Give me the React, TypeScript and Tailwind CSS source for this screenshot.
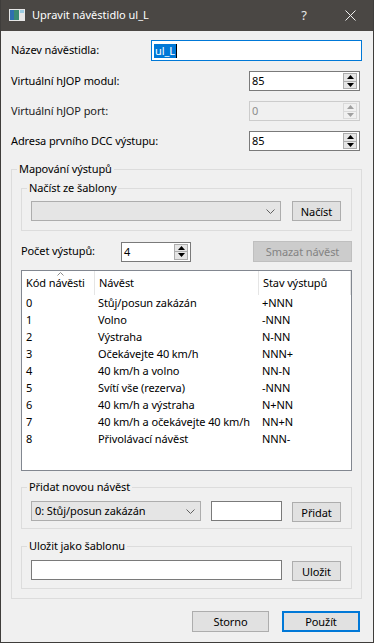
const signals = [
  ["0", "Stůj/posun zakázán", "+NNN"],
  ["1", "Volno", "-NNN"],
  ["2", "Výstraha", "N-NN"],
  ["3", "Očekávejte 40 km/h", "NNN+"],
  ["4", "40 km/h a volno", "NN-N"],
  ["5", "Svítí vše (rezerva)", "-NNN"],
  ["6", "40 km/h a výstraha", "N+NN"],
  ["7", "40 km/h a očekávejte 40 km/h", "NN+N"],
  ["8", "Přivolávací návěst", "NNN-"],
];

function Arrow({ up, disabled }: { up: boolean; disabled?: boolean }) {
  return (
    <svg width="7" height="4" viewBox="0 0 7 4">
      <polygon
        points={up ? "3.5,0 7,4 0,4" : "0,0 7,0 3.5,4"}
        fill={disabled ? "#a0a0a0" : "#000"}
      />
    </svg>
  );
}

function SpinBox({ value, width, disabled = false }: { value: string; width: string; disabled?: boolean }) {
  return (
    <div
      className={`flex items-center h-[20px] border ${width} ${
        disabled ? "border-[#cccccc] bg-[#f0f0f0] text-[#8d8d8d]" : "border-[#7a7a7a] bg-white text-black"
      }`}
    >
      <span className="flex-1 pl-[2px] leading-[18px]">{value}</span>
      <div
        className={`mr-[2px] flex flex-col w-[14px] h-[16px] border ${
          disabled ? "border-[#dadada] bg-[#f0f0f0]" : "border-[#adadad] bg-[#e5e5e5]"
        }`}
      >
        <div className={`flex-1 flex items-center justify-center border-b ${disabled ? "border-[#dadada]" : "border-[#adadad]"}`}>
          <Arrow up disabled={disabled} />
        </div>
        <div className="flex-1 flex items-center justify-center">
          <Arrow up={false} disabled={disabled} />
        </div>
      </div>
    </div>
  );
}

function Combo({ width, text }: { width: string; text?: string }) {
  return (
    <div className={`flex items-center h-[20px] border border-[#adadad] bg-[#e5e5e5] ${width}`}>
      <span className="flex-1 pl-[3px] leading-[18px]">{text}</span>
      <svg width="9" height="5" viewBox="0 0 9 5" className="mr-[5px]">
        <polyline points="0.5,0.5 4.5,4.5 8.5,0.5" fill="none" stroke="#606060" strokeWidth="1" />
      </svg>
    </div>
  );
}

function Btn({ children, className = "" }: { children: React.ReactNode; className?: string }) {
  return (
    <button className={`h-[20px] flex items-center justify-center border border-[#adadad] bg-[#e1e1e1] leading-none ${className}`}>
      {children}
    </button>
  );
}

function Group({ title, className = "", children }: { title: string; className?: string; children: React.ReactNode }) {
  return (
    <fieldset className={`border border-[#dcdcdc] ${className}`}>
      <legend className="ml-[5px] px-[2px] leading-[16px]">{title}</legend>
      {children}
    </fieldset>
  );
}

export default function App() {
  return (
    <div className="w-[374px] h-[643px] flex flex-col bg-[#f0f0f0] border-x border-b border-[#3f3d3b] font-['Noto_Sans',sans-serif] text-[11px] tracking-[-0.1px] text-black overflow-hidden">
      {/* ── Title bar ── */}
      <div className="h-[31px] shrink-0 flex items-center bg-[#4a4744] text-white tracking-normal">
        <svg width="16" height="12" viewBox="0 0 16 12" className="ml-[8px] mt-[-1px]">
          <rect x="0" y="0" width="16" height="12" fill="#e6e6e6" />
          <rect x="1" y="1" width="9" height="10" fill="#3b8a74" />
          <rect x="1" y="1" width="4" height="10" fill="#2f6fb0" />
          <rect x="11" y="1" width="4" height="3" fill="#9ccbe0" />
        </svg>
        <span className="ml-[7px] text-[11px]">Upravit návěstidlo ul_L</span>
        <span className="ml-auto mr-[38px] text-[13px] text-[#e8e8e8]">?</span>
        <svg width="11" height="11" viewBox="0 0 11 11" className="mr-[17px]">
          <path d="M0.5 0.5 L10.5 10.5 M10.5 0.5 L0.5 10.5" stroke="#f0f0f0" strokeWidth="1" />
        </svg>
      </div>

      {/* ── Body ── */}
      <div className="flex-1 flex flex-col pl-[10px] pr-[11px] pt-[9px]">
        <div className="flex items-center justify-between h-[21px]">
          <span>Název návěstidla:</span>
          <div className="w-[211px] h-[21px] flex items-center border border-[#0078d7] bg-white pl-[2px]">
            <span className="bg-[#0078d7] text-white leading-[14px] px-[1px]">ul_L</span>
            <span className="w-[1px] h-[14px] bg-black" />
          </div>
        </div>
        <div className="flex items-center justify-between mt-[10px] pr-[2px]">
          <span>Virtuální hJOP modul:</span>
          <SpinBox value="85" width="w-[111px]" />
        </div>
        <div className="flex items-center justify-between mt-[10px] pr-[2px]">
          <span className="text-[#222]">Virtuální hJOP port:</span>
          <SpinBox value="0" width="w-[111px]" disabled />
        </div>
        <div className="flex items-center justify-between mt-[10px] pr-[2px]">
          <span>Adresa prvního DCC výstupu:</span>
          <SpinBox value="85" width="w-[111px]" />
        </div>

        {/* ── Mapování výstupů ── */}
        <Group title="Mapování výstupů" className="mt-[10px]">
          <div className="px-[9px] pb-[9px]">
            <Group title="Načíst ze šablony" className="mt-[3px]">
              <div className="flex items-center gap-[11px] pl-[9px] mt-[5px] mb-[9px]">
                <Combo width="w-[250px]" />
                <Btn className="w-[49px]">Načíst</Btn>
              </div>
            </Group>

            <div className="flex items-center h-[21px] mt-[10px]">
              <span className="w-[100px]">Počet výstupů:</span>
              <SpinBox value="4" width="w-[70px]" />
              <button className="ml-auto w-[99px] h-[21px] border border-[#bfbfbf] bg-[#cccccc] text-[#838383] leading-none">
                Smazat návěst
              </button>
            </div>

            <div className="mt-[8px] h-[201px] border border-[#828790] bg-white">
              <div className="relative flex h-[24px] items-center">
                <div className="w-[73px] h-full flex items-center pl-[4px] border-r border-[#e5e5e5]">Kód návěsti</div>
                <div className="w-[164px] h-full flex items-center pl-[4px] border-r border-[#e5e5e5]">Návěst</div>
                <div className="w-[92px] h-full flex items-center pl-[4px] border-r border-[#e5e5e5]">Stav výstupů</div>
                <svg width="7" height="4" viewBox="0 0 7 4" className="absolute left-[35px] top-[1px]">
                  <polyline points="0.5,3.5 3.5,0.5 6.5,3.5" fill="none" stroke="#8a8a8a" strokeWidth="1" />
                </svg>
              </div>
              {signals.map(([code, name, state]) => (
                <div key={code} className="flex h-[17px] items-center whitespace-nowrap">
                  <div className="w-[73px] pl-[4px]">{code}</div>
                  <div className="w-[164px] pl-[3px]">{name}</div>
                  <div className="w-[92px] pl-[3px]">{state}</div>
                </div>
              ))}
            </div>

            <Group title="Přidat novou návěst" className="mt-[8px]">
              <div className="flex items-start h-[21px] gap-[10px] pl-[9px] mt-[6px] mb-[6px]">
                <Combo width="w-[170px]" text="0: Stůj/posun zakázán" />
                <div className="w-[71px] h-[20px] border border-[#7a7a7a] bg-white" />
                <Btn className="w-[49px] mt-[1px]">Přidat</Btn>
              </div>
            </Group>

            <Group title="Uložit jako šablonu" className="mt-[9px]">
              <div className="flex items-start h-[21px] gap-[10px] pl-[9px] mt-[6px] mb-[7px]">
                <div className="w-[251px] h-[20px] border border-[#7a7a7a] bg-white" />
                <Btn className="w-[49px] mt-[1px]">Uložit</Btn>
              </div>
            </Group>
          </div>
        </Group>

        {/* ── Dialog buttons ── */}
        <div className="flex justify-end gap-[13px] mt-[12px] pr-[2px]">
          <Btn className="w-[77px] h-[21px]">Storno</Btn>
          <button className="w-[78px] h-[21px] flex items-center justify-center border-2 border-[#0078d7] bg-[#e1e1e1] leading-none">
            Použít
          </button>
        </div>
      </div>
    </div>
  );
}
